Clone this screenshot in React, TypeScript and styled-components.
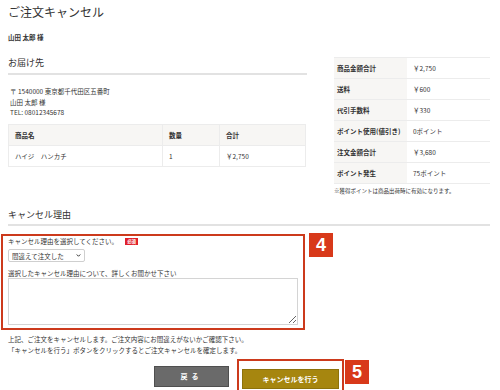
import styled, { createGlobalStyle } from "styled-components";

const GlobalStyle = createGlobalStyle`
  body {
    margin: 0;
    background: #fff;
    color: #333;
    font-family: "Noto Sans CJK JP", "Noto Sans", sans-serif;
  }
  * {
    box-sizing: border-box;
  }
`;

const Page = styled.div`
  width: 500px;
  padding: 0 10px 0 8px;
`;

const Title = styled.h1`
  margin: 0;
  padding-top: 4px;
  font-size: 12px;
  line-height: 16px;
  font-weight: normal;
`;

const CustomerName = styled.p`
  margin: 12px 0 0;
  font-size: 6.5px;
  line-height: 10px;
  font-weight: bold;
`;

const Columns = styled.div`
  display: flex;
  gap: 27px;
  margin-top: 15px;
`;

const LeftColumn = styled.div`
  width: 299px;
`;

const RightColumn = styled.div`
  width: 156px;
`;

const SectionTitle = styled.h2`
  margin: 0;
  padding-bottom: 4px;
  font-size: 9px;
  line-height: 12px;
  font-weight: normal;
  border-bottom: 2px solid #e2e2e2;
`;

const Address = styled.p`
  margin: 11px 0 0;
  padding-left: 2px;
  font-size: 6.5px;
  line-height: 10.5px;
`;

const Table = styled.table<{ $width: number }>`
  width: ${(props) => props.$width}px;
  table-layout: fixed;
  border-collapse: collapse;
  font-size: 6.5px;
`;

const ItemTable = styled(Table)`
  margin-top: 6px;
`;

const Th = styled.th<{ $w?: number }>`
  width: ${(props) => (props.$w ? `${props.$w}px` : "auto")};
  height: 21px;
  padding: 0 6px;
  text-align: left;
  font-weight: bold;
  background: #f7f6f4;
  border: 1px solid #ececec;
`;

const Td = styled.td`
  height: 21px;
  padding: 0 6px;
  border: 1px solid #ececec;
`;

const SummaryLabel = styled.th`
  width: 73px;
  height: 21px;
  padding: 0 3px;
  text-align: left;
  font-weight: bold;
  white-space: nowrap;
  background: #f7f6f4;
  border-bottom: 1px solid #ececec;
`;

const SummaryValue = styled.td`
  height: 21px;
  padding: 0 6px;
  border-bottom: 1px solid #ececec;
`;

const SummaryTable = styled(Table)`
  border-top: 1px solid #ececec;
`;

const Note = styled.p`
  margin: 3px 0 0;
  font-size: 5.5px;
  line-height: 9px;
`;

const CancelSection = styled.section`
  margin-top: 13px;
`;

const WideTitle = styled(SectionTitle)`
  padding-bottom: 3px;
`;

const FormRow = styled.div`
  display: flex;
  align-items: flex-start;
  gap: 4px;
  margin: 8px 0 0 -7px;
`;

const HighlightBox = styled.div`
  width: 304px;
  padding: 0 5px 3px;
  border: 2px solid #cc3a1c;
`;

const FieldLabel = styled.div`
  display: flex;
  align-items: center;
  font-size: 6.5px;
  line-height: 10px;
`;

const Required = styled.span`
  margin-left: 7px;
  padding: 0 2px;
  background: #e0202a;
  color: #fff;
  font-size: 4.5px;
  line-height: 7px;
  font-weight: bold;
`;

const SelectWrap = styled.div`
  position: relative;
  width: 77px;
  margin-top: 3px;
`;

const Select = styled.select`
  display: block;
  width: 100%;
  height: 13px;
  padding: 0 0 0 3px;
  appearance: none;
  border: 1px solid #cfcfcf;
  border-radius: 2px;
  background: #fff;
  color: #333;
  font-family: inherit;
  font-size: 6.5px;
`;

const Chevron = styled.svg`
  position: absolute;
  right: 4px;
  top: 4px;
  width: 5px;
  height: 5px;
  pointer-events: none;
`;

const TextLabel = styled(FieldLabel)`
  margin-top: 7px;
  line-height: 9px;
`;

const TextArea = styled.textarea`
  display: block;
  width: 290px;
  height: 47px;
  border: 1px solid #d4d4d4;
  resize: vertical;
`;

const StepBadge = styled.div`
  width: 24px;
  height: 24px;
  display: flex;
  align-items: center;
  justify-content: center;
  background: #d8391a;
  color: #fff;
  font-family: "Liberation Sans", Arial, sans-serif;
  font-size: 18px;
  font-weight: bold;
`;

const FormBadge = styled(StepBadge)`
  margin-top: -1px;
`;

const Notice = styled.p`
  margin: 4px 0 0;
  font-size: 6.5px;
  line-height: 11px;
`;

const ButtonRow = styled.div`
  display: flex;
  justify-content: center;
  align-items: center;
  gap: 8px;
  margin-top: 3px;
`;

const Button = styled.button<{ $primary?: boolean }>`
  width: ${(props) => (props.$primary ? 97 : 75)}px;
  height: ${(props) => (props.$primary ? 20 : 21)}px;
  padding: 0;
  border: 1px solid ${(props) => (props.$primary ? "#8d720a" : "#4f4f4f")};
  background: ${(props) => (props.$primary ? "#a6860f" : "#6a6a6a")};
  color: #fff;
  font-family: inherit;
  font-size: 7px;
  font-weight: bold;
  letter-spacing: ${(props) => (props.$primary ? 0 : 4)}px;
`;

const ButtonHighlight = styled.div`
  position: relative;
  padding: 2px 3px;
  border: 2px solid #cc3a1c;
`;

const ButtonBadge = styled(StepBadge)`
  position: absolute;
  left: calc(100% + 3px);
  top: -1px;
`;

const summary = [
  ["商品金額合計", "￥2,750"],
  ["送料", "￥600"],
  ["代引手数料", "￥330"],
  ["ポイント使用(値引き)", "0ポイント"],
  ["注文金額合計", "￥3,680"],
  ["ポイント発生", "75ポイント"],
];

function App() {
  return (
    <>
      <GlobalStyle />
      <Page>
        <Title>ご注文キャンセル</Title>
        <CustomerName>山田 太郎 様</CustomerName>
        <Columns>
          <LeftColumn>
            <SectionTitle>お届け先</SectionTitle>
            <Address>
              〒 1540000 東京都千代田区五番町
              <br />
              山田 太郎 様
              <br />
              TEL: 08012345678
            </Address>
            <ItemTable $width={298}>
              <thead>
                <tr>
                  <Th $w={154}>商品名</Th>
                  <Th $w={57}>数量</Th>
                  <Th>合計</Th>
                </tr>
              </thead>
              <tbody>
                <tr>
                  <Td>ハイジ　ハンカチ</Td>
                  <Td>1</Td>
                  <Td>￥2,750</Td>
                </tr>
              </tbody>
            </ItemTable>
          </LeftColumn>
          <RightColumn>
            <SummaryTable $width={156}>
              <tbody>
                {summary.map(([label, value]) => (
                  <tr key={label}>
                    <SummaryLabel>{label}</SummaryLabel>
                    <SummaryValue>{value}</SummaryValue>
                  </tr>
                ))}
              </tbody>
            </SummaryTable>
            <Note>※獲得ポイントは商品出荷時に有効になります。</Note>
          </RightColumn>
        </Columns>

        <CancelSection>
          <WideTitle>キャンセル理由</WideTitle>
          <FormRow>
            <HighlightBox>
              <FieldLabel>
                キャンセル理由を選択してください。
                <Required>必須</Required>
              </FieldLabel>
              <SelectWrap>
                <Select defaultValue="mistake">
                  <option value="mistake">間違えて注文した</option>
                </Select>
                <Chevron viewBox="0 0 10 10">
                  <path d="M1.5 3 L5 6.5 L8.5 3" fill="none" stroke="#333" strokeWidth="2" />
                </Chevron>
              </SelectWrap>
              <TextLabel>選択したキャンセル理由について、詳しくお聞かせ下さい</TextLabel>
              <TextArea />
            </HighlightBox>
            <FormBadge>4</FormBadge>
          </FormRow>
          <Notice>
            上記、ご注文をキャンセルします。ご注文内容にお間違えがないかご確認下さい。
            <br />
            「キャンセルを行う」ボタンをクリックするとご注文キャンセルを確定します。
          </Notice>
          <ButtonRow>
            <Button>戻る</Button>
            <ButtonHighlight>
              <Button $primary>キャンセルを行う</Button>
              <ButtonBadge>5</ButtonBadge>
            </ButtonHighlight>
          </ButtonRow>
        </CancelSection>
      </Page>
    </>
  );
}

export default App;
